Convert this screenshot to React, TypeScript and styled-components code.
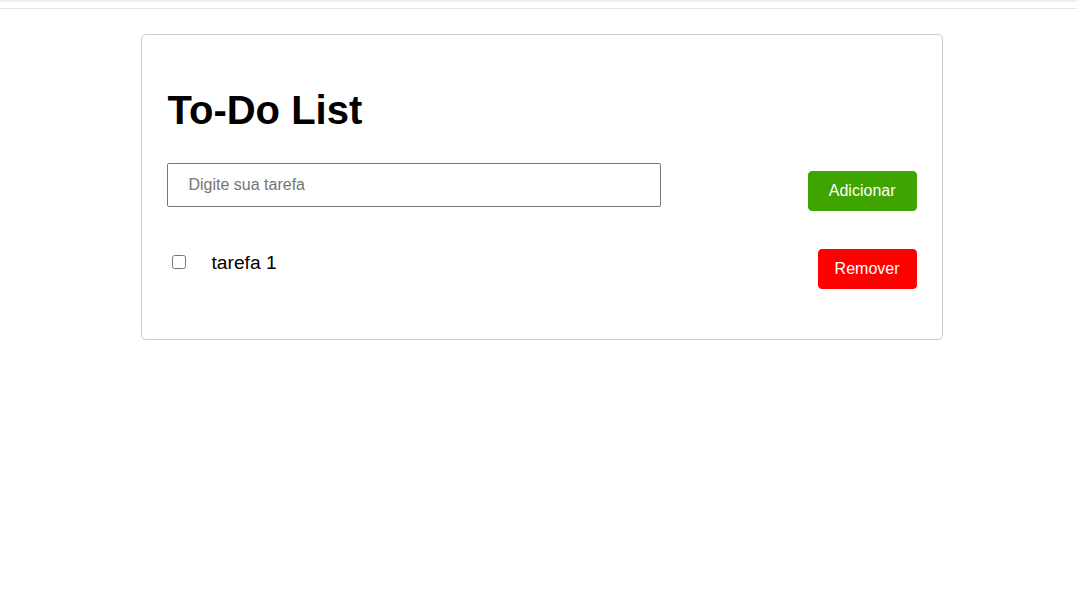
import React, { useState } from "react";
import styled, { createGlobalStyle } from "styled-components";

const GlobalStyle = createGlobalStyle`
  html, body {
    margin: 0;
    padding: 0;
    background: #ffffff;
    font-family: "Liberation Sans", Arial, sans-serif;
  }
`;

const TopStrip = styled.div`
  height: 2px;
  background: #eeeff3;
`;

const TopRule = styled.div`
  height: 6px;
  border-bottom: 1px solid #e3e3e3;
`;

const Page = styled.main`
  display: flex;
  justify-content: center;
  padding: 25px 0 0 6px;
`;

const Card = styled.section`
  box-sizing: border-box;
  width: 802px;
  border: 1px solid #cccccc;
  border-radius: 5px;
  padding: 25px;
`;

const Title = styled.h1`
  margin: 27px 0 30px 1px;
  font-size: 40px;
  font-weight: 700;
  color: #000000;
  line-height: 46px;
`;

const FormRow = styled.form`
  display: flex;
  justify-content: space-between;
  align-items: flex-start;
`;

const TaskInput = styled.input`
  box-sizing: border-box;
  width: 494px;
  height: 44px;
  padding: 0 21px;
  border: 1px solid #767676;
  border-radius: 2px;
  font-family: "Liberation Sans", Arial, sans-serif;
  font-size: 16px;
  color: #000;
  outline: none;
  &::placeholder {
    color: #757575;
  }
`;

const ActionButton = styled.button<{ $tone: "add" | "remove"; $pad: number; $top: number }>`
  box-sizing: border-box;
  height: 40px;
  margin-top: ${(p) => p.$top}px;
  padding: 0 ${(p) => p.$pad}px;
  border: 1px solid ${(p) => (p.$tone === "add" ? "#3fa300" : "#ff0000")};
  border-radius: 4px;
  background: ${(p) => (p.$tone === "add" ? "#3fa300" : "#ff0000")};
  color: #ffffff;
  font-family: "Liberation Sans", Arial, sans-serif;
  font-size: 16px;
  cursor: pointer;
`;

const TaskList = styled.ul`
  list-style: none;
  margin: 38px 0 0;
  padding: 0 0 25px;
`;

const TaskRow = styled.li`
  display: flex;
  justify-content: space-between;
  align-items: flex-start;
`;

const TaskLabel = styled.label`
  display: flex;
  align-items: flex-start;
`;

const Check = styled.input`
  box-sizing: border-box;
  width: 14px;
  height: 14px;
  margin: 6px 0 0 5px;
`;

const TaskText = styled.span`
  margin: 3px 0 0 26px;
  font-size: 19.2px;
  line-height: 22px;
  color: #000000;
`;

export default function App() {
  const [tasks, setTasks] = useState([{ id: 1, text: "tarefa 1", done: false }]);
  const [value, setValue] = useState("");

  return (
    <>
      <GlobalStyle />
      <TopStrip />
      <TopRule />
      <Page>
        <Card>
          <Title>To-Do List</Title>
          <FormRow
            onSubmit={(e) => {
              e.preventDefault();
              if (!value.trim()) return;
              setTasks([...tasks, { id: Date.now(), text: value, done: false }]);
              setValue("");
            }}
          >
            <TaskInput
              placeholder="Digite sua tarefa"
              value={value}
              onChange={(e) => setValue(e.target.value)}
            />
            <ActionButton type="submit" $tone="add" $pad={20} $top={8}>
              Adicionar
            </ActionButton>
          </FormRow>
          <TaskList>
            {tasks.map((t) => (
              <TaskRow key={t.id}>
                <TaskLabel>
                  <Check
                    type="checkbox"
                    checked={t.done}
                    onChange={() =>
                      setTasks(tasks.map((x) => (x.id === t.id ? { ...x, done: !x.done } : x)))
                    }
                  />
                  <TaskText>{t.text}</TaskText>
                </TaskLabel>
                <ActionButton
                  type="button"
                  $tone="remove"
                  $pad={16}
                  $top={0}
                  onClick={() => setTasks(tasks.filter((x) => x.id !== t.id))}
                >
                  Remover
                </ActionButton>
              </TaskRow>
            ))}
          </TaskList>
        </Card>
      </Page>
    </>
  );
}
